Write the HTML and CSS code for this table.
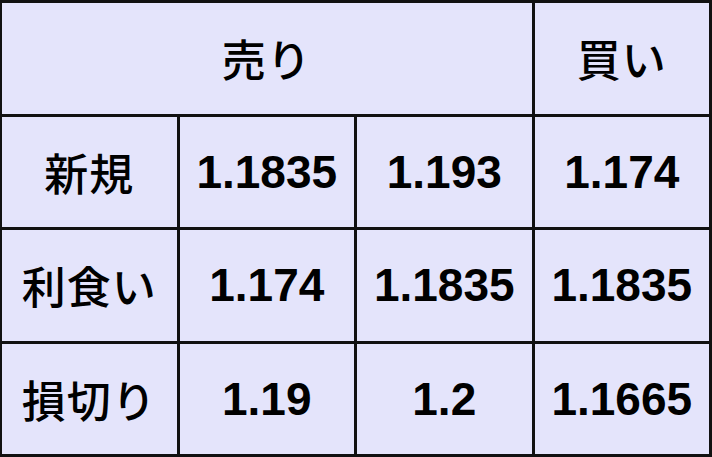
FILE: index.html
```html
<!DOCTYPE html>
<html lang="ja">
<head>
<meta charset="utf-8">
<link rel="stylesheet" href="styles.css">
</head>
<body>
<div class="table">
  <div class="cell head span3">売り</div>
  <div class="cell head">買い</div>
  <div class="cell label">新規</div>
  <div class="cell num">1.1835</div>
  <div class="cell num">1.193</div>
  <div class="cell num">1.174</div>
  <div class="cell label">利食い</div>
  <div class="cell num">1.174</div>
  <div class="cell num">1.1835</div>
  <div class="cell num">1.1835</div>
  <div class="cell label">損切り</div>
  <div class="cell num">1.19</div>
  <div class="cell num">1.2</div>
  <div class="cell num">1.1665</div>
</div>
</body>
</html>
```
FILE: styles.css
```css
html, body {
  margin: 0;
  padding: 0;
  background: #ffffff;
}
.table {
  width: 712px;
  height: 457px;
  box-sizing: border-box;
  background: #111111;
  padding: 3px 3px 3px 2px;
  display: grid;
  grid-template-columns: repeat(4, 1fr);
  grid-template-rows: repeat(4, 1fr);
  gap: 3px;
}
.cell {
  background: #e4e4fb;
  color: #000;
  display: flex;
  align-items: center;
  justify-content: center;
}
.span3 {
  grid-column: span 3;
}
.head, .label {
  font-family: "Noto Sans CJK JP", sans-serif;
  font-weight: 500;
  font-size: 44px;
  letter-spacing: 1px;
}
.num {
  font-family: "Liberation Sans", Arial, sans-serif;
  font-weight: 700;
  font-size: 46px;
}
```
